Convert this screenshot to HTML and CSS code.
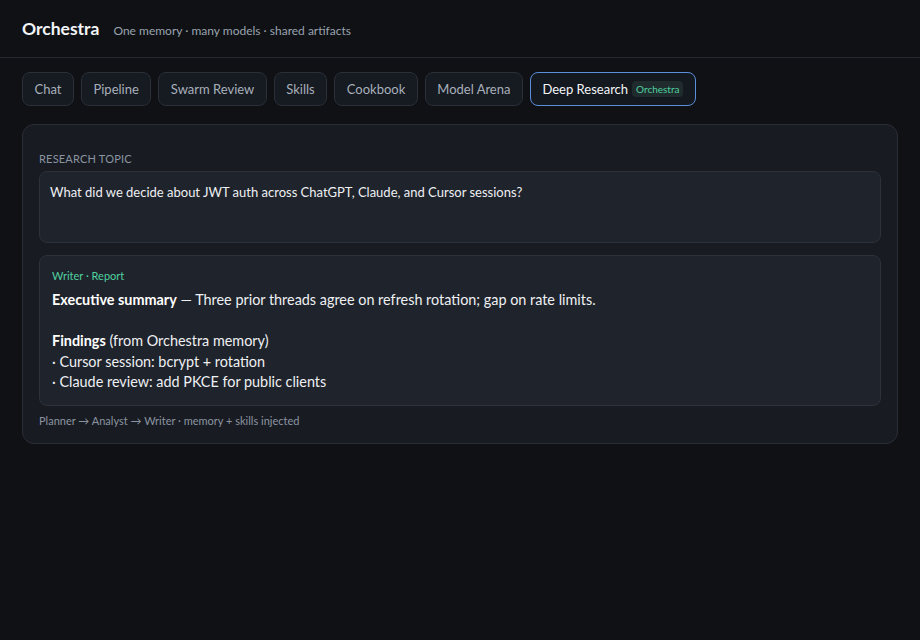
FILE: index.html
```html
<!DOCTYPE html>
<html>
<head>
    <link rel="stylesheet" href="styles.css">
</head>
<body>
    <div class="header">
        <span class="brand">Orchestra</span>
        <span class="tagline">One memory · many models · shared artifacts</span>
    </div>

    <div class="tabs">
        <button class="tab">Chat</button>
        <button class="tab">Pipeline</button>
        <button class="tab">Swarm Review</button>
        <button class="tab">Skills</button>
        <button class="tab">Cookbook</button>
        <button class="tab">Model Arena</button>
        <button class="tab active">Deep Research <span class="badge">Orchestra</span></button>
    </div>

    <div class="card">
        <div class="label">RESEARCH TOPIC</div>
        <div class="topic">What did we decide about JWT auth across ChatGPT, Claude, and Cursor sessions?</div>

        <div class="report">
            <div class="reportHead">Writer · Report</div>
            <div class="reportBody"><b>Executive summary</b> — Three prior threads agree on refresh rotation; gap on rate limits.

<b>Findings</b> (from Orchestra memory)
· Cursor session: bcrypt + rotation
· Claude review: add PKCE for public clients</div>
        </div>

        <div class="footnote">Planner → Analyst → Writer · memory + skills injected</div>
    </div>
</body>
</html>
```

FILE: styles.css
```css
body{
    margin: 0;
    background-color: #0f1115;
    color: #e6e8ec;
    font-family: Lato, "Noto Sans", sans-serif;
}

.header{
    display: flex;
    align-items: baseline;
    gap: 14px;
    padding: 18px 22px 18px;
    border-bottom: 1px solid #262a31;
}

.brand{
    font-size: 17.5px;
    font-weight: 700;
    color: #f3f5f8;
}

.tagline{
    font-size: 12px;
    color: #9aa3ae;
}

.tabs{
    display: flex;
    gap: 7px;
    padding: 14px 22px 18px;
}

.tab{
    height: 34px;
    padding: 0 11.5px;
    background-color: #161a21;
    border: 1px solid #2a2f38;
    border-radius: 8px;
    color: #a8b0bb;
    font-family: inherit;
    font-size: 13px;
    display: flex;
    align-items: center;
    gap: 4px;
}

.tab.active{
    border-color: #5b8fd9;
    color: #f3f5f8;
    background-color: #14181f;
}

.badge{
    font-size: 10px;
    color: #4fd1a0;
    background-color: #1f2b2c;
    padding: 2px 4px;
    border-radius: 4px;
}

.card{
    margin: 0 22px;
    padding: 27px 16px 16px;
    background-color: #181b22;
    border: 1px solid #2a2e37;
    border-radius: 12px;
}

.label{
    font-size: 11px;
    color: #8b94a0;
    letter-spacing: 0.2px;
    margin-bottom: 6px;
}

.topic{
    height: 72px;
    box-sizing: border-box;
    padding: 12px 10px;
    background-color: #1f232b;
    border: 1px solid #2c313a;
    border-radius: 8px;
    font-size: 13px;
    color: #eef0f3;
}

.report{
    margin-top: 12px;
    padding: 13px 12px 12px;
    background-color: #1f232b;
    border: 1px solid #2c313a;
    border-radius: 8px;
}

.reportHead{
    font-size: 11px;
    color: #4fd1a0;
    margin-bottom: 8px;
}

.reportBody{
    white-space: pre-wrap;
    font-size: 14.4px;
    line-height: 20.5px;
    color: #eef0f3;
}

.reportBody b{
    color: #ffffff;
}

.footnote{
    margin-top: 8px;
    font-size: 11px;
    color: #8b94a0;
}
```
